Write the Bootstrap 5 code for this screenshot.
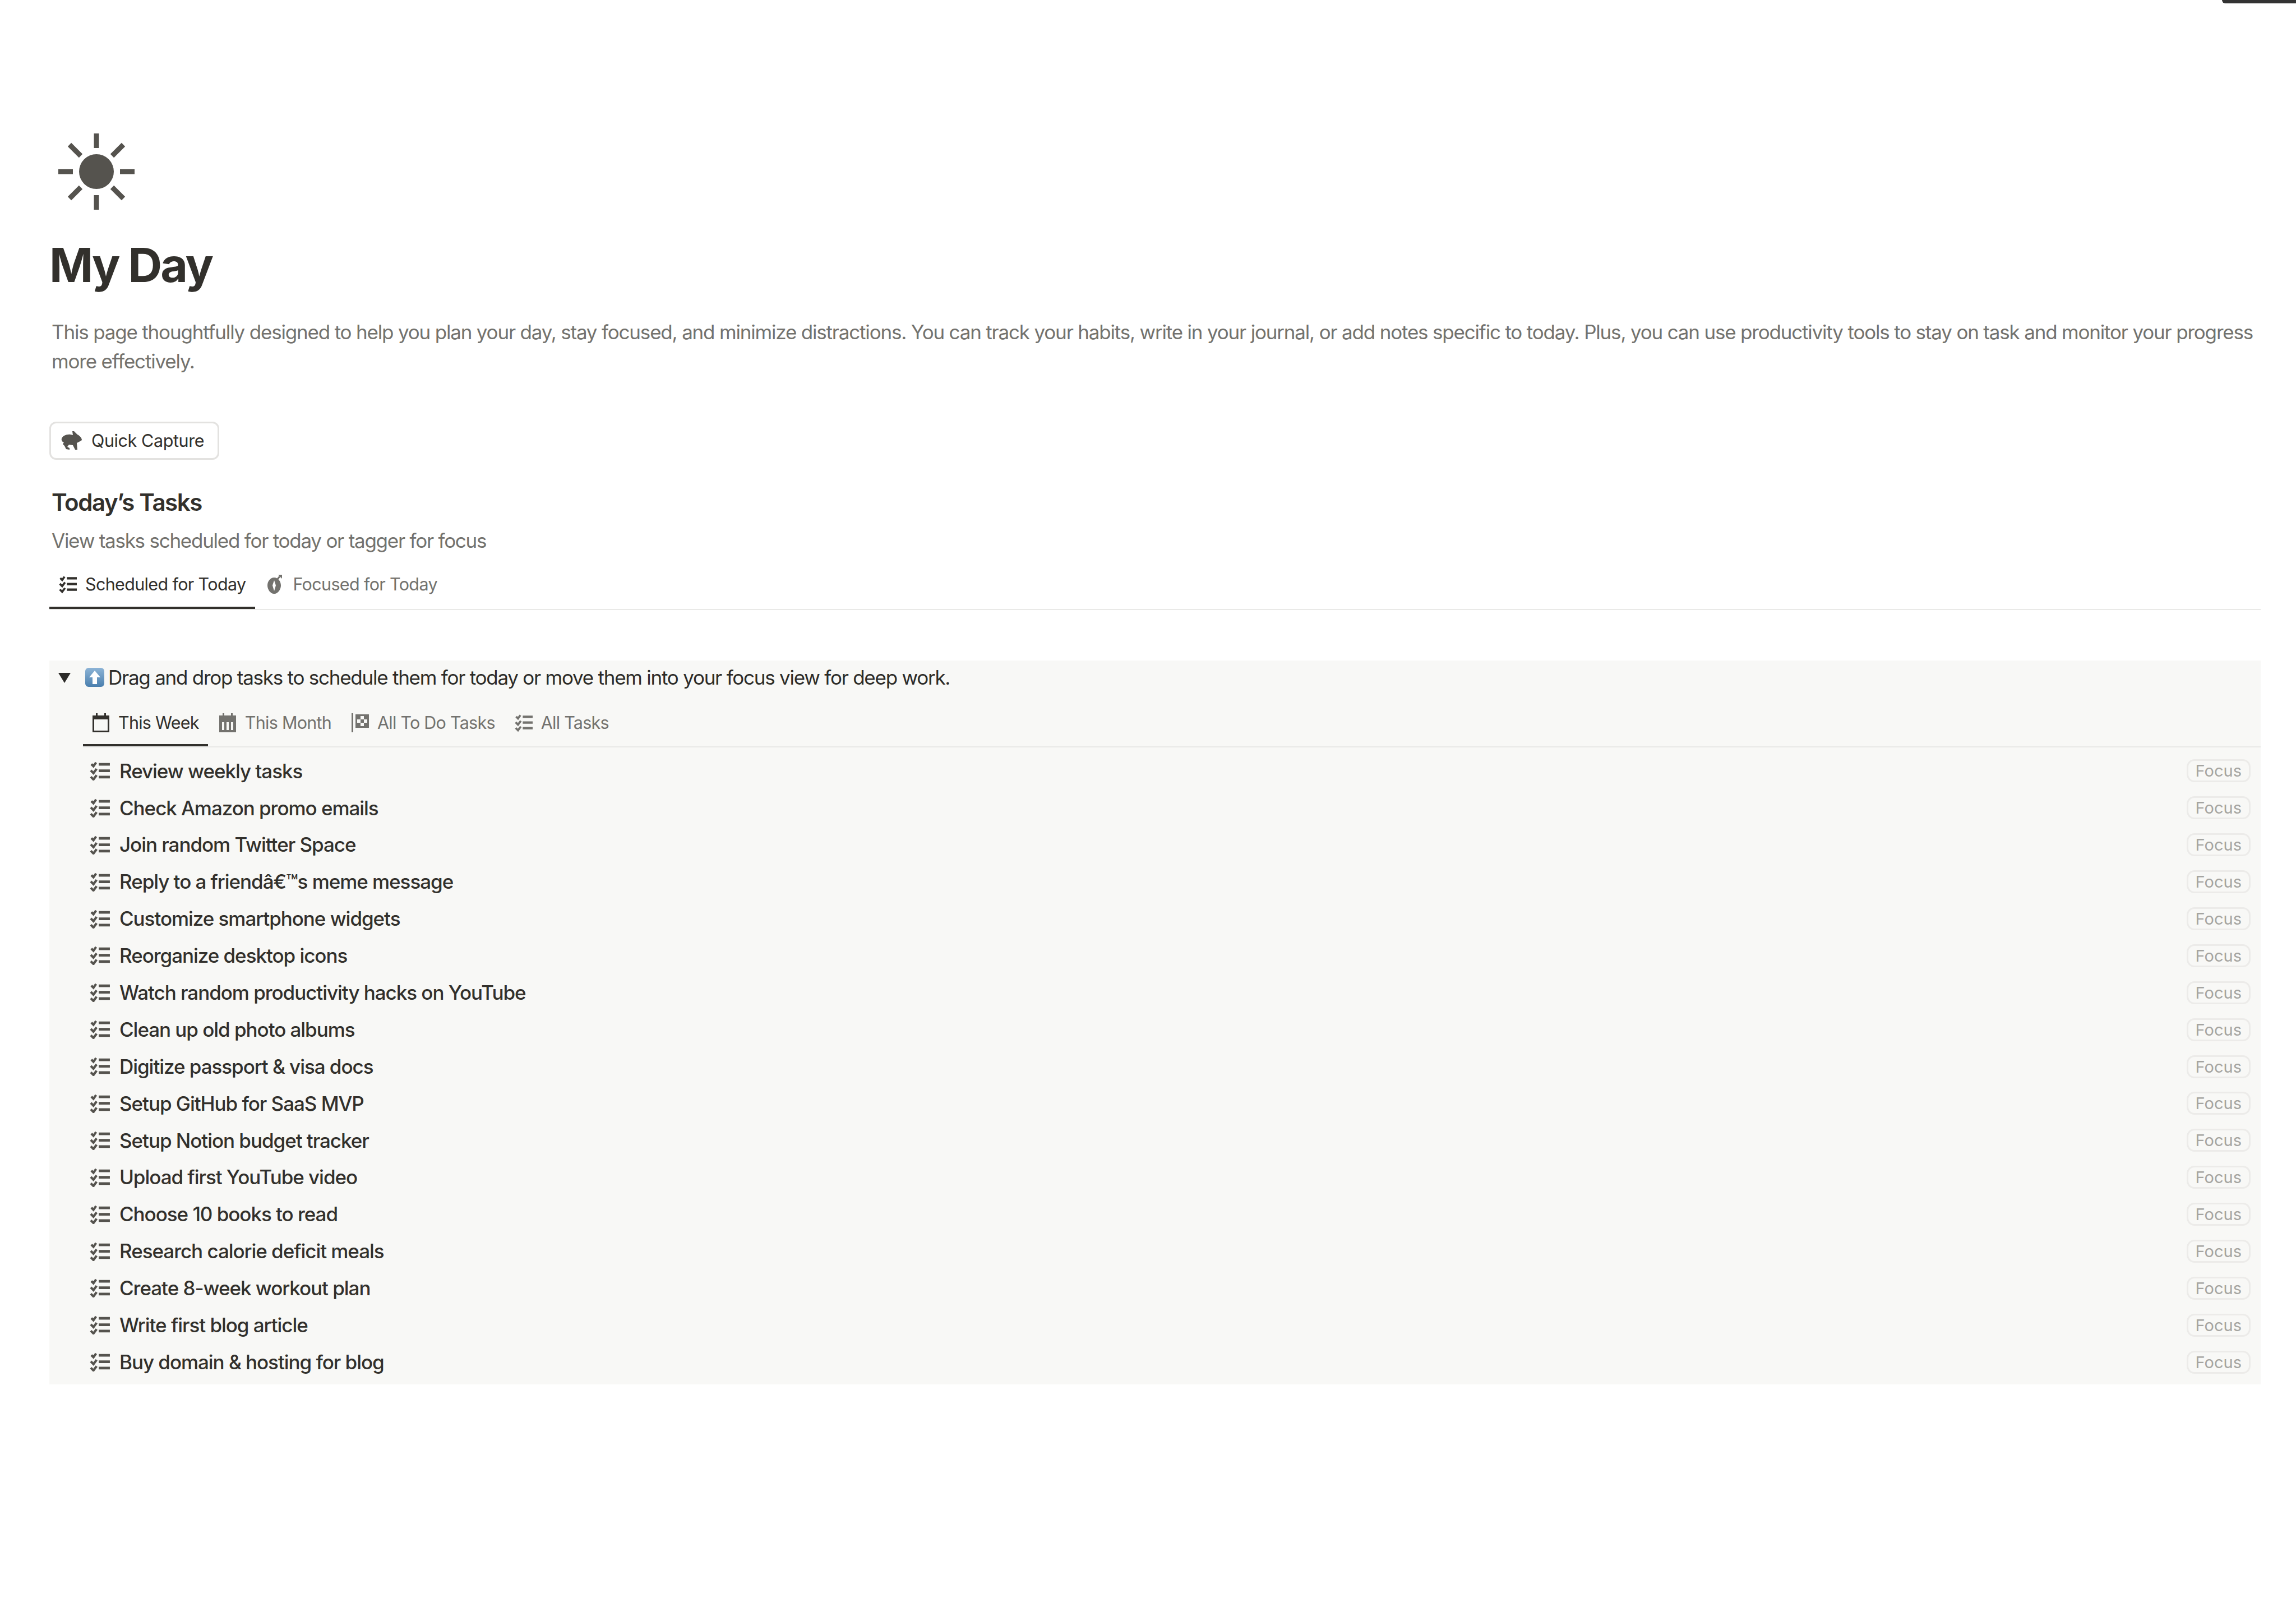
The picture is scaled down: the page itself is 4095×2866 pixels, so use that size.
<!DOCTYPE html>
<html lang="en">
<head>
    <meta charset="UTF-8">
    <title>My Day</title>
    <link rel="stylesheet" href="https://cdn.jsdelivr.net/npm/bootstrap@5.3.3/dist/css/bootstrap.min.css">
    <style>
        body { font-family: Inter, "Liberation Sans", sans-serif; color: #32302c; background: #fff; }
        .page-wrap { padding: 238px 63px 0 88px; }
        .top-tab { position: absolute; top: 0; right: 0; width: 132px; height: 6px; background: #333; border-radius: 0 0 0 14px; }
        .sun-icon { display: block; width: 136px; height: 136px; margin-left: 16px; color: #55534e; }
        .page-title { font-size: 84px; font-weight: 700; line-height: 100px; letter-spacing: -3px; margin: 49px 0 0; }
        .page-intro { font-size: 35px; line-height: 52px; letter-spacing: -1.19px; color: #73726e; margin: 43px 0 0 4px; }
        .capture-btn { display: inline-flex; align-items: center; gap: 16px; height: 68px; margin-top: 82px; padding: 0 24px 0 18px; font-size: 30.5px; letter-spacing: -.4px; color: #32302c; background: #fff; border: 3px solid #e3e2e0; border-radius: 12px; }
        .capture-btn svg { width: 38px; height: 34px; color: #55534e; }
        .section-title { font-size: 42px; font-weight: 600; line-height: 56px; letter-spacing: -1.4px; margin: 48px 0 0 4px; }
        .section-sub { font-size: 35px; line-height: 50px; letter-spacing: -1.25px; color: #73726e; margin: 15px 0 0 4px; }
        .tab-bar { border-bottom: 2px solid #e9e9e7; gap: 3px; }
        .tab-link { display: flex; align-items: center; gap: 15px; height: 84px; padding: 0 17px; font-size: 30.5px; letter-spacing: -.65px; color: #73726e; border-bottom: 4px solid transparent; }
        .tab-link svg { width: 32px; height: 34px; flex-shrink: 0; }
        .tab-link.is-on { color: #32302c; border-bottom-color: #32302c; }
        .main-tabs { margin-top: 13px; }
        .callout-box { margin-top: 90px; padding-bottom: 7px; background: #f8f8f6; }
        .callout-head { height: 60px; padding-left: 15px; font-size: 35px; letter-spacing: -1.25px; color: #2c2b28; }
        .callout-head .tri { width: 24px; height: 24px; margin-right: 24px; }
        .callout-head .up { width: 36px; height: 36px; margin-right: 6px; }
        .sub-tabs { margin: 13.5px 0 0 60px; }
        .sub-tabs .tab-link { height: 79px; padding: 0 16px; letter-spacing: -.75px; }
        .task-list { margin: 9.5px 0 0; padding: 0 18px 0 72px; list-style: none; }
        .task-row { height: 65.9px; font-size: 35px; font-weight: 450; letter-spacing: -1.05px; }
        .task-row svg { width: 36px; height: 34px; margin-right: 17px; color: #55534e; flex-shrink: 0; }
        .focus-pill { font-size: 29px; font-weight: 400; letter-spacing: 0; line-height: 35px; padding: 0 13px; color: #a5a4a0; border: 3px solid #ecebe9; border-radius: 14px; }
    </style>
</head>
<body>
<svg width="0" height="0" class="position-absolute">
    <symbol id="ico-list" viewBox="0 0 38 36">
        <path d="M3 5l4 4 5-7M2 17l5 5 6-8M2 29l5 5 6-8" fill="none" stroke="currentColor" stroke-width="4.4"/>
        <path d="M17 3h21v5H17zM17 15h21v5H17zM17 27h21v5H17z" fill="currentColor"/>
    </symbol>
    <symbol id="ico-week" viewBox="0 0 32 34">
        <path d="M7 0h3v5H7zM22 0h3v5h-3z" fill="currentColor"/>
        <path d="M1 4h30v30H1zM4 11v20h24V11z" fill="currentColor" fill-rule="evenodd"/>
    </symbol>
    <symbol id="ico-month" viewBox="0 0 32 34">
        <path d="M7 0h3v5H7zM22 0h3v5h-3z" fill="currentColor"/>
        <path d="M1 4h30v30H1zM6 16v14h4V16zM14 16v14h4V16zM22 16v14h4V16z" fill="currentColor" fill-rule="evenodd"/>
    </symbol>
    <symbol id="ico-flag" viewBox="0 0 32 34">
        <path d="M1 0h3v34H1zM8 2h24v24H8zM17 5v6h6V5zM11 11v6h6v-6zM23 11v6h6v-6zM17 17v6h6v-6z" fill="currentColor" fill-rule="evenodd"/>
    </symbol>
    <symbol id="ico-timer" viewBox="0 0 32 34">
        <path d="M14 5C7 5 2 12 2 19s5 15 12 15 12-8 12-15S21 5 14 5zM14 10l3 9-3 10-3-10z" fill="currentColor" fill-rule="evenodd"/>
        <path d="M19 9l5-6" stroke="currentColor" stroke-width="3" fill="none"/>
        <path d="M21 0h7v7z" fill="currentColor"/>
    </symbol>
</svg>

<div class="top-tab"></div>

<div class="page-wrap">
    <!-- Header -->
    <svg class="sun-icon" viewBox="0 0 136 136">
        <circle cx="68" cy="68" r="31" fill="currentColor"/>
        <g stroke="currentColor" stroke-width="9">
            <path d="M68 0v26M68 110v26M0 68h26M110 68h26M20 20l20 20M96 96l20 20M20 116l20-20M96 40l20-20"/>
        </g>
    </svg>
    <h1 class="page-title">My Day</h1>
    <p class="page-intro">This page thoughtfully designed to help you plan your day, stay focused, and minimize distractions. You can track your habits, write in your journal, or add notes specific to today. Plus, you can use productivity tools to stay on task and monitor your progress more effectively.</p>

    <button class="capture-btn" type="button">
        <svg viewBox="0 0 38 34"><path d="M1 13C3 8 10 5 17 6L21 7 20 0 23 0 29 6C33 8 37 12 37 16L32 19 28 21 29 33 25 33 21 25 14 24 11 28 15 30 15 33 9 32 6 26 3 23 5 20C2 19 0 16 1 13z" fill="currentColor"/></svg>
        Quick Capture
    </button>

    <h2 class="section-title">Today’s Tasks</h2>
    <p class="section-sub">View tasks scheduled for today or tagger for focus</p>

    <div class="d-flex tab-bar main-tabs">
        <div class="tab-link is-on"><svg><use href="#ico-list"/></svg>Scheduled for Today</div>
        <div class="tab-link"><svg><use href="#ico-timer"/></svg>Focused for Today</div>
    </div>

    <!-- Callout -->
    <div class="callout-box">
        <div class="d-flex align-items-center callout-head">
            <svg class="tri" viewBox="0 0 24 24"><path d="M1 4h22L12 22z" fill="currentColor"/></svg>
            <svg class="up" viewBox="0 0 36 36">
                <defs><linearGradient id="upBg" x1="0" y1="0" x2="0" y2="1"><stop offset="0" stop-color="#8db4d6"/><stop offset="1" stop-color="#4a7fae"/></linearGradient></defs>
                <rect x="1" y="1" width="34" height="34" rx="6" fill="url(#upBg)"/>
                <path d="M18 6l10 12h-6v12h-8V18H8z" fill="#fff"/>
            </svg>
            Drag and drop tasks to schedule them for today or move them into your focus view for deep work.
        </div>
        <div class="d-flex tab-bar sub-tabs">
            <div class="tab-link is-on"><svg><use href="#ico-week"/></svg>This Week</div>
            <div class="tab-link"><svg><use href="#ico-month"/></svg>This Month</div>
            <div class="tab-link"><svg><use href="#ico-flag"/></svg>All To Do Tasks</div>
            <div class="tab-link"><svg><use href="#ico-list"/></svg>All Tasks</div>
        </div>
        <ul class="task-list" id="taskList"></ul>
    </div>
</div>

<script>
    const tasks = [
        "Review weekly tasks", "Check Amazon promo emails", "Join random Twitter Space",
        "Reply to a friendâ€™s meme message", "Customize smartphone widgets", "Reorganize desktop icons",
        "Watch random productivity hacks on YouTube", "Clean up old photo albums", "Digitize passport &amp; visa docs",
        "Setup GitHub for SaaS MVP", "Setup Notion budget tracker", "Upload first YouTube video",
        "Choose 10 books to read", "Research calorie deficit meals", "Create 8-week workout plan",
        "Write first blog article", "Buy domain &amp; hosting for blog"
    ];
    document.getElementById("taskList").innerHTML = tasks.map(t => `
        <li class="d-flex align-items-center task-row">
            <svg><use href="#ico-list"/></svg>
            <span class="flex-grow-1">${t}</span>
            <span class="focus-pill">Focus</span>
        </li>`).join("");
</script>
<script src="https://cdn.jsdelivr.net/npm/bootstrap@5.3.3/dist/js/bootstrap.bundle.min.js"></script>
</body>
</html>
